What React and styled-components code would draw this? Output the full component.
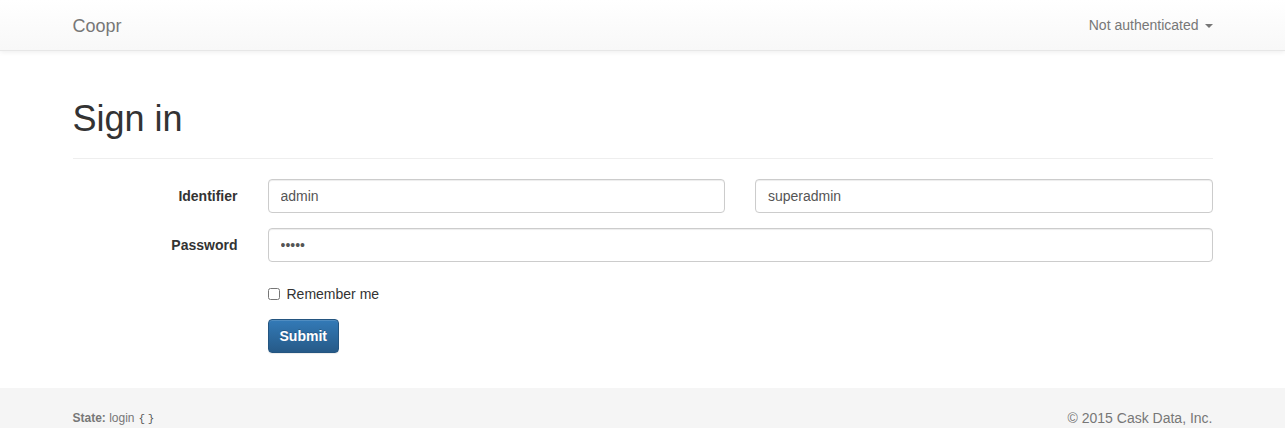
import React from 'react';
import styled, { createGlobalStyle } from 'styled-components';

const colors = {
  text: '#333333',
  muted: '#777777',
  border: '#cccccc',
  brand: '#337ab7',
  brandDark: '#265a88',
  footer: '#f5f5f5',
};

const Global = createGlobalStyle`
  * { box-sizing: border-box; }
  html, body { margin: 0; padding: 0; background: #fff; }
  body {
    font-family: "Liberation Sans", Arial, Helvetica, sans-serif;
    font-size: 14px;
    line-height: 1.42857;
    color: ${colors.text};
  }
`;

const Page = styled.div`
  min-height: 428px;
  display: flex;
  flex-direction: column;
`;

const Navbar = styled.nav`
  height: 51px;
  background: linear-gradient(to bottom, #ffffff 0%, #f8f8f8 100%);
  border-bottom: 1px solid #e7e7e7;
  box-shadow: 0 1px 5px rgba(0, 0, 0, 0.075);
`;

const Container = styled.div`
  width: 1170px;
  margin: 0 auto;
  padding: 0 15px;
`;

const NavInner = styled(Container)`
  height: 100%;
  padding-top: 2px;
  display: flex;
  align-items: center;
  justify-content: space-between;
`;

const Brand = styled.a`
  font-size: 18px;
  line-height: 20px;
  color: ${colors.muted};
  text-decoration: none;
`;

const NavMenu = styled.a`
  display: flex;
  align-items: center;
  gap: 6px;
  font-size: 14px;
  color: ${colors.muted};
  text-decoration: none;
`;

const Caret = styled.span`
  width: 0;
  height: 0;
  border-top: 4px solid ${colors.muted};
  border-left: 4px solid transparent;
  border-right: 4px solid transparent;
  margin-top: 1px;
`;

const Main = styled(Container)`
  flex: 1;
  padding-bottom: 20px;
`;

const PageHeader = styled.div`
  margin: 48px 0 20px;
  padding-bottom: 9px;
  border-bottom: 1px solid #eeeeee;
`;

const Title = styled.h1`
  margin: 0 0 10px;
  font-size: 36px;
  font-weight: 500;
  line-height: 1.1;
  color: ${colors.text};
`;

const Row = styled.div`
  display: grid;
  grid-template-columns: 195px 1fr;
  margin: 0 -15px 15px;
`;

const Label = styled.label`
  padding: 7px 15px 0;
  text-align: right;
  font-weight: bold;
  line-height: 20px;
`;

const Field = styled.div`
  padding: 0 15px;
  display: grid;
  grid-template-columns: ${p => (p.split ? '1fr 1fr' : '1fr')};
  gap: 30px;
`;

const Input = styled.input`
  display: block;
  width: 100%;
  height: 34px;
  padding: 6px 12px;
  font-family: inherit;
  font-size: 14px;
  color: #555555;
  background: #fff;
  border: 1px solid ${colors.border};
  border-radius: 4px;
  box-shadow: inset 0 1px 1px rgba(0, 0, 0, 0.075);
  outline: none;
`;

const CheckLine = styled.label`
  display: flex;
  align-items: center;
  gap: 7px;
  padding-top: 7px;
  line-height: 20px;
  font-weight: normal;
`;

const Check = styled.input`
  margin: 0;
  width: 12px;
  height: 12px;
`;

const Button = styled.button`
  height: 34px;
  padding: 6px 11px;
  font-family: inherit;
  font-size: 14px;
  font-weight: bold;
  color: #fff;
  background: linear-gradient(to bottom, ${colors.brand} 0%, ${colors.brandDark} 100%);
  border: 1px solid #245580;
  border-radius: 4px;
  text-shadow: 0 -1px 0 rgba(0, 0, 0, 0.2);
  box-shadow: inset 0 1px 0 rgba(255, 255, 255, 0.15), 0 1px 1px rgba(0, 0, 0, 0.075);
`;

const Footer = styled.footer`
  background: ${colors.footer};
  padding: 20px 0 20px;
`;

const FootInner = styled(Container)`
  display: flex;
  align-items: center;
  justify-content: space-between;
  line-height: 20px;
  color: ${colors.muted};
`;

const State = styled.small`
  font-size: 12px;
  color: ${colors.muted};
  b { font-weight: bold; }
`;

const Code = styled.code`
  font-family: "Liberation Mono", "DejaVu Sans Mono", monospace;
  font-size: 11px;
  letter-spacing: -2px;
  margin-left: 4px;
  color: #555;
`;

const Copy = styled.span`
  font-size: 14px;
`;

export default function App() {
  return (
    <Page>
      <Global />
      <Navbar>
        <NavInner>
          <Brand href="#">Coopr</Brand>
          <NavMenu href="#">Not authenticated <Caret /></NavMenu>
        </NavInner>
      </Navbar>

      <Main>
        <PageHeader>
          <Title>Sign in</Title>
        </PageHeader>

        <form onSubmit={e => e.preventDefault()}>
          <Row>
            <Label>Identifier</Label>
            <Field split>
              <Input defaultValue="admin" />
              <Input defaultValue="superadmin" />
            </Field>
          </Row>
          <Row>
            <Label>Password</Label>
            <Field>
              <Input type="password" defaultValue="admin" />
            </Field>
          </Row>
          <Row>
            <span />
            <Field>
              <CheckLine>
                <Check type="checkbox" />
                Remember me
              </CheckLine>
            </Field>
          </Row>
          <Row>
            <span />
            <Field>
              <div><Button type="submit">Submit</Button></div>
            </Field>
          </Row>
        </form>
      </Main>

      <Footer>
        <FootInner>
          <State><b>State:</b> login<Code>{'{ }'}</Code></State>
          <Copy>© 2015 Cask Data, Inc.</Copy>
        </FootInner>
      </Footer>
    </Page>
  );
}
